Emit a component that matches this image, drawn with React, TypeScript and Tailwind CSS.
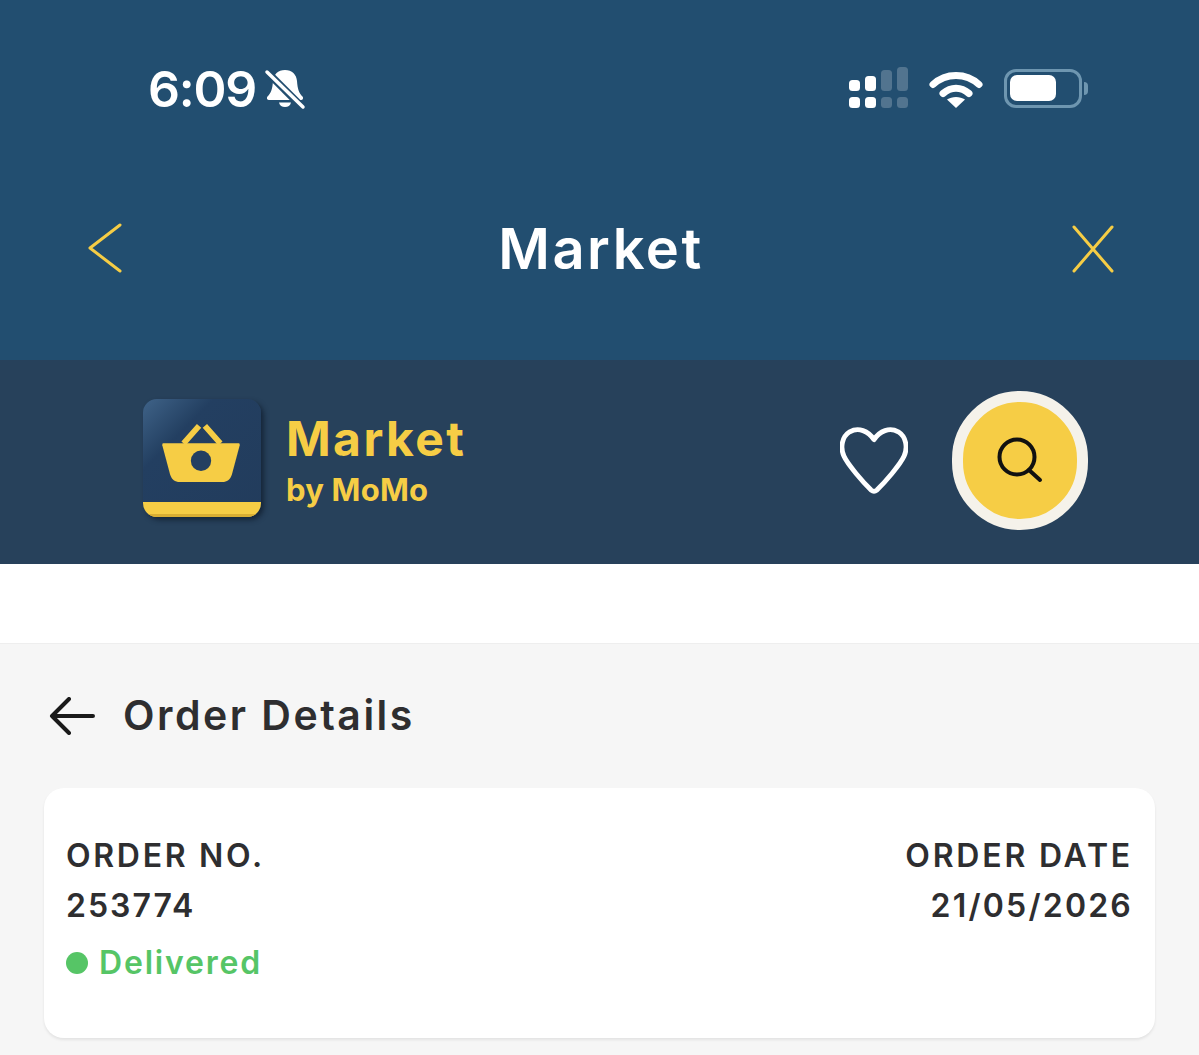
const labelFont = "font-['Inter','Liberation_Sans',sans-serif]";

function StatusBar() {
  return (
    <div className="flex h-[176px] items-start justify-between pl-[148px] pr-[111px] pt-[62px]">
      <div className="flex items-center gap-[8px]">
        <span className="font-['Inter',sans-serif] text-[50px] leading-[54px] font-semibold text-white tracking-[-1.200px]">6:09</span>
        <svg width="42" height="42" viewBox="0 0 42 42" fill="none">
          <path d="M21 2c-7 0-11.500 4.500-12 11-.5 8-2 12-5.500 15.500-1.200 1.300-.5 3.500 1.500 3.500h32c2 0 2.700-2.200 1.500-3.500C35 25 33.500 21 33 13c-.5-6.500-5-11-12-11z" fill="#fff" />
          <path d="M15 34.500c.6 3 3 4.500 6 4.500s5.400-1.500 6-4.500z" fill="#fff" />
          <path d="M2 3l37 37" stroke="#224e70" strokeWidth="7.500" />
          <path d="M3 4l36 35" stroke="#fff" strokeWidth="3.500" strokeLinecap="round" />
        </svg>
      </div>
      <div className="flex items-center gap-[21px] pt-[5px]">
        <svg width="60" height="42" viewBox="0 0 60 42">
          <rect x="1" y="13" width="11" height="11" rx="3.500" fill="#fff" />
          <rect x="17" y="9" width="11" height="15" rx="3.500" fill="#fff" />
          <rect x="33" y="3" width="11" height="21" rx="3.500" fill="#fff" fillOpacity="0.22" />
          <rect x="49" y="0" width="11" height="24" rx="3.500" fill="#fff" fillOpacity="0.22" />
          <rect x="1" y="30" width="11" height="11" rx="3.500" fill="#fff" />
          <rect x="17" y="30" width="11" height="11" rx="3.500" fill="#fff" />
          <rect x="33" y="30" width="11" height="11" rx="3.500" fill="#fff" fillOpacity="0.22" />
          <rect x="49" y="30" width="11" height="11" rx="3.500" fill="#fff" fillOpacity="0.22" />
        </svg>
        <svg width="54" height="40" viewBox="0 0 54 40" fill="none">
          <path d="M4 16.500C17 4.500 37 4.500 50 16.500" stroke="#fff" strokeWidth="7" strokeLinecap="round" />
          <path d="M14 25.500c8-7 18-7 26 0" stroke="#fff" strokeWidth="7" strokeLinecap="round" />
          <path d="M27 40l-9-8.500c5-3.500 13-3.500 18 0z" fill="#fff" />
        </svg>
        <div className="flex items-center gap-[2px]">
          <div className="flex h-[39px] w-[78px] items-center rounded-[12px] border-[3px] border-[#6e96b0] p-[3px]">
            <div className="h-[26px] w-[46px] rounded-[7px] bg-white" />
          </div>
          <div className="h-[13px] w-[4px] rounded-r-full bg-[#6e96b0]" />
        </div>
      </div>
    </div>
  );
}

function NavBar() {
  return (
    <div className="flex h-[184px] items-start justify-between pl-[87px] pr-[84px] pt-[46px]">
      <svg width="36" height="52" viewBox="0 0 36 52" fill="none">
        <path d="M33 3L3 26l30 23" stroke="#f6cd45" strokeWidth="3" strokeLinecap="round" strokeLinejoin="round" />
      </svg>
      <span className={`ml-[8px] text-[56px] leading-[54px] font-semibold text-white tracking-[2.500px] ${labelFont}`}>Market</span>
      <svg className="mt-[2px]" width="44" height="50" viewBox="0 0 44 50" fill="none">
        <path d="M3 3l38 44M41 3L3 47" stroke="#f6cd45" strokeWidth="3" strokeLinecap="round" />
      </svg>
    </div>
  );
}

function MarketLogo() {
  return (
    <div className="relative mb-[9px] h-[118px] w-[118px] overflow-hidden rounded-[14px] bg-[linear-gradient(135deg,#3f6388_0%,#233f61_30%,#223c5c_100%)] shadow-[3px_3px_5px_rgba(10,20,35,0.6)]">
      <svg className="absolute left-[18px] top-[25px]" width="80" height="60" viewBox="0 0 82 62">
        <path d="M23 20L39 2M45 2l16 18" stroke="#f6cd45" strokeWidth="6" fill="none" />
        <path d="M2 20h78c1 0 1 1 1 2l-8 30c-2 6-5 8-10 8H19c-5 0-8-2-10-8L1 22c0-1 0-2 1-2z" fill="#f6cd45" />
        <circle cx="41" cy="38" r="10.500" fill="#233f61" />
      </svg>
      <div className="absolute inset-x-0 bottom-0 h-[15px] border-b-[3px] border-[#d9ae33] bg-[#f6cd45]" />
    </div>
  );
}

function BrandBar() {
  return (
    <div className="flex h-[204px] items-center justify-between bg-[#27415b] pl-[143px] pr-[111px]">
      <div className="flex items-center gap-[25px]">
        <MarketLogo />
        <div className={`flex flex-col pt-[3px] font-bold text-[#f6cd45] ${labelFont}`}>
          <span className="text-[48px] leading-[50px] tracking-[2.400px]">Market</span>
          <span className="mt-[2px] text-[31px] leading-[48px] tracking-[0.2px]">by MoMo</span>
        </div>
      </div>
      <div className="mb-[4px] flex items-center gap-[44px]">
        <svg className="mb-[2px]" width="68" height="70" viewBox="0 0 70 70" fill="none">
          <path d="M35 15C29 6 19 2 10 7 2 12 0 23 4 32c4 9 20 27 28 35 2 1.500 4 1.500 6 0 8-8 24-26 28-35 4-9 2-20-6-25-9-5-19-1-25 8z" stroke="#fff" strokeWidth="5" strokeLinejoin="round" />
        </svg>
        <div className="flex h-[139px] w-[136px] items-center justify-center rounded-full border-[11px] border-[#f5f2ea] bg-[#f6cd45]">
          <svg width="46" height="46" viewBox="0 0 46 46" fill="none">
            <circle cx="20" cy="20" r="17.500" stroke="#111" strokeWidth="4" />
            <path d="M32 33l11 10" stroke="#111" strokeWidth="4" strokeLinecap="round" />
          </svg>
        </div>
      </div>
    </div>
  );
}

function OrderCard() {
  return (
    <div className="flex h-[250px] justify-between rounded-[20px] bg-white px-[22px] pt-[43px] shadow-[0_2px_3px_rgba(0,0,0,0.08)]">
      <div className={`flex flex-col ${labelFont}`}>
        <span className="text-[32px] leading-[50px] font-semibold tracking-[2.700px] text-[#2e2e30]">ORDER NO.</span>
        <span className="text-[32px] leading-[50px] font-semibold tracking-[2px] text-[#2e2e30]">253774</span>
        <div className="mt-[7px] flex items-center gap-[11px]">
          <div className="h-[22px] w-[22px] rounded-full bg-[#56c566]" />
          <span className="text-[32px] leading-[50px] font-semibold tracking-[1.800px] text-[#56c566]">Delivered</span>
        </div>
      </div>
      <div className={`flex flex-col items-end ${labelFont}`}>
        <span className="text-[32px] leading-[50px] font-semibold tracking-[2.800px] text-[#2e2e30]">ORDER DATE</span>
        <span className="text-[32px] leading-[50px] font-semibold tracking-[2.200px] text-[#2e2e30]">21/05/2026</span>
      </div>
    </div>
  );
}

export default function App() {
  return (
    <div className="flex h-[1055px] w-[1199px] flex-col overflow-hidden bg-white">
      <div className="bg-[#224e70]">
        <StatusBar />
        <NavBar />
      </div>
      <BrandBar />
      <div className="h-[79px] bg-white" />
      <div className="flex-1 border-t border-[#eeeeee] bg-[#f6f6f6] px-[44px]">
        <div className="flex h-[144px] items-center gap-[28px] pl-[5px]">
          <svg width="46" height="38" viewBox="0 0 46 38" fill="none">
            <path d="M44 19H3M20 2L3 19l17 17" stroke="#1a1a1a" strokeWidth="4" strokeLinecap="round" strokeLinejoin="round" />
          </svg>
          <span className={`text-[41px] font-semibold tracking-[2.500px] text-[#2e2e30] ${labelFont}`}>Order Details</span>
        </div>
        <OrderCard />
      </div>
    </div>
  );
}
